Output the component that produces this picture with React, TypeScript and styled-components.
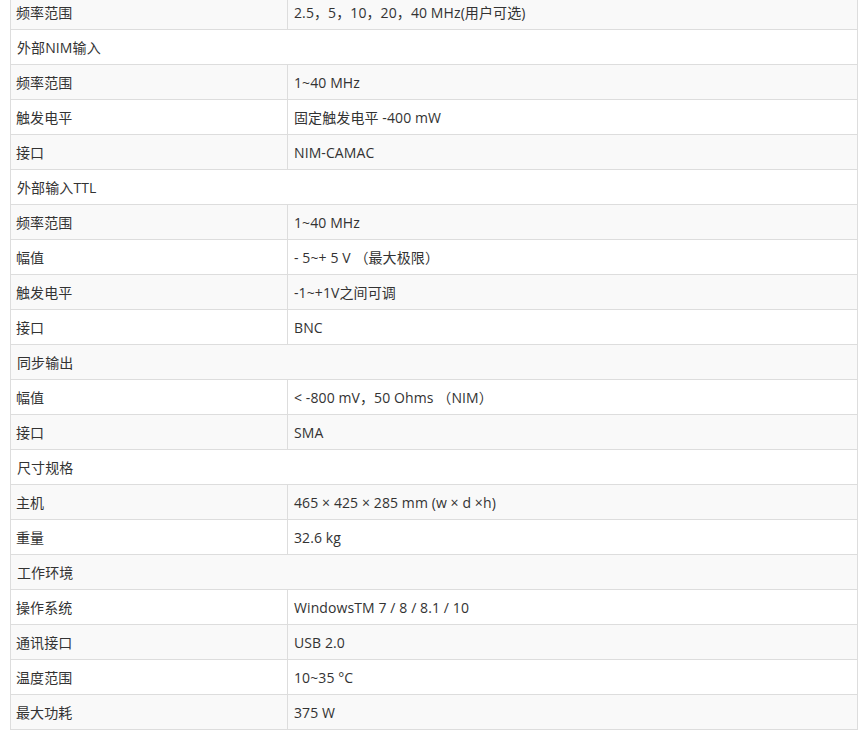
import { createGlobalStyle } from "styled-components";
import styled from "styled-components";

const GlobalStyle = createGlobalStyle`
  html, body {
    margin: 0;
    padding: 0;
    background: #fff;
  }
  body {
    font-family: "Open Sans", "Noto Sans CJK SC", sans-serif;
    color: #333;
  }
`;

const Page = styled.div`
  padding: 0 10px;
  margin-top: -6px;
`;

const SpecTable = styled.table`
  width: 848px;
  border-collapse: collapse;
  border: 1px solid #ddd;
  font-size: 14px;

  tr:nth-child(odd) {
    background: #f9f9f9;
  }
`;

const Cell = styled.td<{ $label?: boolean }>`
  border: 1px solid #ddd;
  height: 32px;
  padding: 2px 5px 0;
  line-height: 20px;
  vertical-align: middle;
  color: #333;
  letter-spacing: 0.1px;
  width: ${(p) => (p.$label ? "266px" : "auto")};
  padding-left: ${(p) => (p.$label ? "5px" : "6px")};
`;

type Row = { section: string } | { label: string; value: string };

const rows: Row[] = [
  { label: "频率范围", value: "2.5，5，10，20，40 MHz(用户可选)" },
  { section: "外部NIM输入" },
  { label: "频率范围", value: "1~40 MHz" },
  { label: "触发电平", value: "固定触发电平 -400 mW" },
  { label: "接口", value: "NIM-CAMAC" },
  { section: "外部输入TTL" },
  { label: "频率范围", value: "1~40 MHz" },
  { label: "幅值", value: "- 5~+ 5 V （最大极限）" },
  { label: "触发电平", value: "-1~+1V之间可调" },
  { label: "接口", value: "BNC" },
  { section: "同步输出" },
  { label: "幅值", value: "< -800 mV，50 Ohms （NIM）" },
  { label: "接口", value: "SMA" },
  { section: "尺寸规格" },
  { label: "主机", value: "465 × 425 × 285 mm (w × d ×h)" },
  { label: "重量", value: "32.6 kg" },
  { section: "工作环境" },
  { label: "操作系统", value: "WindowsTM 7 / 8 / 8.1 / 10" },
  { label: "通讯接口", value: "USB 2.0" },
  { label: "温度范围", value: "10~35 °C" },
  { label: "最大功耗", value: "375 W" },
];

export default function App() {
  return (
    <>
      <GlobalStyle />
      <Page>
        <SpecTable>
          <tbody>
            {rows.map((r, i) =>
              "section" in r ? (
                <tr key={i}>
                  <Cell colSpan={2}>{r.section}</Cell>
                </tr>
              ) : (
                <tr key={i}>
                  <Cell $label>{r.label}</Cell>
                  <Cell>{r.value}</Cell>
                </tr>
              )
            )}
          </tbody>
        </SpecTable>
      </Page>
    </>
  );
}
